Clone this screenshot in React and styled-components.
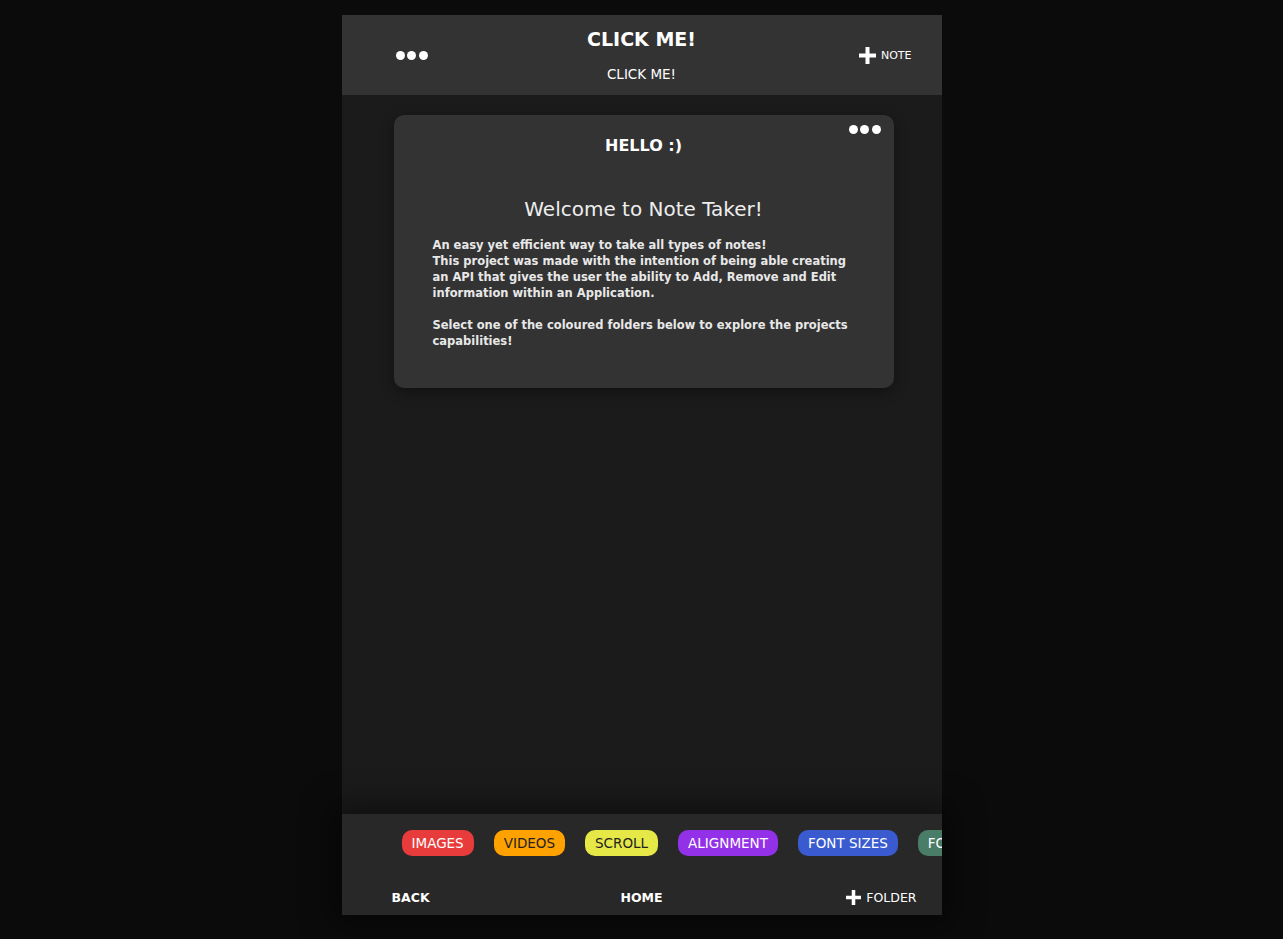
import React from "react";
import styled, { createGlobalStyle } from "styled-components";

const Global = createGlobalStyle`
  html, body { margin: 0; padding: 0; background: #0b0b0b; }
  body { font-family: "DejaVu Sans", Verdana, sans-serif; }
`;

const Page = styled.div`
  display: flex;
  justify-content: center;
  padding: 15px 0 24px;
`;

const Phone = styled.div`
  width: 600px;
  height: 900px;
  background: #1b1b1b;
  display: flex;
  flex-direction: column;
  color: #fff;
`;

const Header = styled.header`
  height: 80px;
  background: #333333;
  display: grid;
  grid-template-columns: 1fr auto 1fr;
  align-items: center;
  padding: 0 30px;
  flex-shrink: 0;
`;

const Dots = styled.div`
  display: flex;
  gap: 2.5px;
  justify-self: start;
  span {
    width: 9px;
    height: 9px;
    border-radius: 50%;
    background: #fff;
  }
`;

const HeaderMenu = styled(Dots)`
  margin-left: 24px;
`;

const TitleBlock = styled.div`
  display: flex;
  flex-direction: column;
  align-items: center;
  gap: 18px;
`;

const Title = styled.h1`
  margin: 0;
  font-size: 19px;
  font-weight: bold;
  line-height: 20px;
`;

const Subtitle = styled.div`
  font-size: 13.5px;
  line-height: 15px;
`;

const AddButton = styled.div`
  justify-self: end;
  display: flex;
  align-items: center;
  gap: 5px;
  font-size: ${(p) => p.$size || 11}px;
  color: #fff;
`;

const Plus = ({ size = 17 }) => (
  <svg width={size} height={size} viewBox="0 0 17 17">
    <rect x="6.5" y="0" width="4" height="17" fill="#fff" />
    <rect x="0" y="6.5" width="17" height="4" fill="#fff" />
  </svg>
);

const Main = styled.main`
  flex: 1;
  display: flex;
  flex-direction: column;
  align-items: center;
  padding: 20px 0 0 4px;
`;

const Card = styled.section`
  position: relative;
  width: 500px;
  box-sizing: border-box;
  background: #333333;
  border-radius: 10px;
  box-shadow: 0 4px 14px rgba(0, 0, 0, 0.35);
  padding: 20px 39px 39px;
  display: flex;
  flex-direction: column;
  align-items: center;
`;

const CardMenu = styled(Dots)`
  position: absolute;
  top: 10px;
  right: 13px;
`;

const CardTitle = styled.h2`
  margin: 0;
  font-size: 16px;
  font-weight: bold;
  line-height: 22px;
`;

const Welcome = styled.h3`
  margin: 38px 0 0;
  font-size: 20px;
  font-weight: normal;
  line-height: 28px;
  color: #eee;
`;

const Body = styled.div`
  align-self: stretch;
  margin-top: 14px;
  font-size: 11.5px;
  font-weight: bold;
  line-height: 16px;
  color: #e8e8e8;
  p { margin: 0; }
  p + p { margin-top: 16px; }
`;

const Footer = styled.footer`
  height: 101px;
  flex-shrink: 0;
  background: #282828;
  box-shadow: 0 0 30px 10px rgba(0, 0, 0, 0.45);
  display: flex;
  flex-direction: column;
  overflow: hidden;
`;

const Folders = styled.div`
  display: flex;
  gap: 20px;
  padding: 16px 0 0 60px;
  white-space: nowrap;
`;

const Pill = styled.div`
  flex-shrink: 0;
  height: 26px;
  padding: 0 10px;
  border-radius: 10px;
  background: ${(p) => p.$bg};
  color: ${(p) => p.$fg};
  font-size: 13.5px;
  display: flex;
  align-items: center;
`;

const Nav = styled.nav`
  margin-top: auto;
  height: 36px;
  display: grid;
  grid-template-columns: 1fr auto 1fr;
  align-items: center;
  padding: 0 25px;
  font-size: 12.5px;
`;

const NavLink = styled.div`
  font-weight: bold;
  justify-self: ${(p) => p.$justify || "start"};
  margin-left: ${(p) => p.$indent || 0}px;
`;

const folders = [
  ["IMAGES", "#e83b3b", "#fff"],
  ["VIDEOS", "#ffa200", "#222"],
  ["SCROLL", "#e6e847", "#222"],
  ["ALIGNMENT", "#9331e8", "#fff"],
  ["FONT SIZES", "#3a5bcf", "#fff"],
  ["FONTS", "#4a7d68", "#fff"],
];

export default function App() {
  return (
    <>
      <Global />
      <Page>
        <Phone>
          <Header>
            <HeaderMenu>
              <span />
              <span />
              <span />
            </HeaderMenu>
            <TitleBlock>
              <Title>CLICK ME!</Title>
              <Subtitle>CLICK ME!</Subtitle>
            </TitleBlock>
            <AddButton>
              <Plus />
              NOTE
            </AddButton>
          </Header>
          <Main>
            <Card>
              <CardMenu>
                <span />
                <span />
                <span />
              </CardMenu>
              <CardTitle>HELLO :)</CardTitle>
              <Welcome>Welcome to Note Taker!</Welcome>
              <Body>
                <p>
                  An easy yet efficient way to take all types of notes!
                  <br />
                  This project was made with the intention of being able creating
                  an API that gives the user the ability to Add, Remove and Edit
                  information within an Application.
                </p>
                <p>
                  Select one of the coloured folders below to explore the projects
                  capabilities!
                </p>
              </Body>
            </Card>
          </Main>
          <Footer>
            <Folders>
              {folders.map(([name, bg, fg]) => (
                <Pill key={name} $bg={bg} $fg={fg}>
                  {name}
                </Pill>
              ))}
            </Folders>
            <Nav>
              <NavLink $indent={25}>BACK</NavLink>
              <NavLink $justify="center">HOME</NavLink>
              <AddButton $size={12.5}>
                <Plus size={15} />
                FOLDER
              </AddButton>
            </Nav>
          </Footer>
        </Phone>
      </Page>
    </>
  );
}
